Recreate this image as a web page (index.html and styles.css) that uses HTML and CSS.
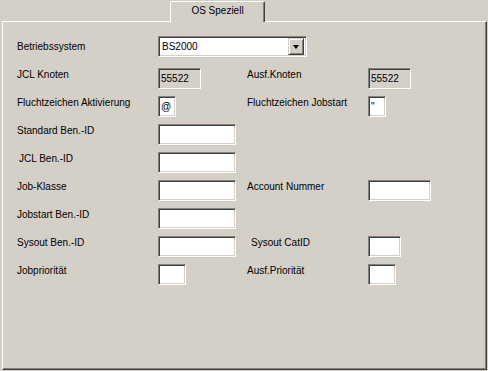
FILE: index.html
```html
<!DOCTYPE html>
<html lang="de">
<head>
    <meta charset="UTF-8">
    <title>OS Speziell</title>
    <link rel="stylesheet" href="styles.css">
</head>
<body>
    <div class="window">
        <div class="tabbar">
            <div class="tab">OS Speziell</div>
        </div>

        <div class="panel">
            <div class="combo-row">
                <label class="label">Betriebssystem</label>
                <div class="combo">
                    <span class="combo-text">BS2000</span>
                    <span class="combo-button"><span class="arrow"></span></span>
                </div>
            </div>

            <div class="form-grid">
                <label class="label">JCL Knoten</label>
                <div><input class="field field-ro w-node" value="55522" readonly></div>
                <label class="label">Ausf.Knoten</label>
                <div><input class="field field-ro w-node" value="55522" readonly></div>

                <label class="label">Fluchtzeichen Aktivierung</label>
                <div><input class="field w-char" value="@"></div>
                <label class="label">Fluchtzeichen Jobstart</label>
                <div><input class="field w-char" value="&quot;"></div>

                <label class="label">Standard Ben.-ID</label>
                <div><input class="field w-id"></div>
                <div></div>
                <div></div>

                <label class="label indent">JCL Ben.-ID</label>
                <div><input class="field w-id"></div>
                <div></div>
                <div></div>

                <label class="label">Job-Klasse</label>
                <div><input class="field w-id"></div>
                <label class="label">Account Nummer</label>
                <div><input class="field w-account"></div>

                <label class="label">Jobstart Ben.-ID</label>
                <div><input class="field w-id"></div>
                <div></div>
                <div></div>

                <label class="label">Sysout Ben.-ID</label>
                <div><input class="field w-id"></div>
                <label class="label indent-wide">Sysout CatID</label>
                <div><input class="field w-cat"></div>

                <label class="label">Jobpriorität</label>
                <div><input class="field w-prio"></div>
                <label class="label">Ausf.Priorität</label>
                <div><input class="field w-prio"></div>
            </div>
        </div>
    </div>
</body>
</html>
```

FILE: styles.css
```css
* {
    margin: 0;
    padding: 0;
    box-sizing: border-box;
}

body {
    background-color: #d4d0c8;
    font-family: "Liberation Sans", Arial, sans-serif;
    font-size: 10px;
    color: #000;
}

.window {
    width: 487px;
    padding: 1px 0 0 2px;
}

.tabbar {
    display: flex;
    height: 20px;
    padding-left: 168px;
}

.tab {
    width: 95px;
    height: 21px;
    padding-top: 3px;
    line-height: 12px;
    text-align: center;
    background-color: #d4d0c8;
    border-top: 1px solid #fff;
    border-left: 1px solid #fff;
    border-right: 1px solid #404040;
    border-radius: 2px 2px 0 0;
    box-shadow: inset -1px 0 #808080;
    position: relative;
    z-index: 1;
}

.panel {
    width: 485px;
    height: 349px;
    border-top: 1px solid #fff;
    border-left: 1px solid #fff;
    border-right: 1px solid #404040;
    border-bottom: 1px solid #404040;
    box-shadow: inset -1px -1px #808080;
    padding: 14px 0 0 14px;
}

.combo-row {
    display: flex;
    align-items: center;
    height: 21px;
    margin-bottom: 11px;
}

.combo-row .label {
    width: 141px;
    padding-top: 0;
}

.label {
    line-height: 12px;
    padding-top: 1px;
    white-space: nowrap;
}

.indent {
    padding-left: 2px;
}

.indent-wide {
    padding-left: 4px;
}

.combo {
    width: 149px;
    height: 21px;
    display: flex;
    align-items: center;
    justify-content: space-between;
    background-color: #fff;
    border: 1px solid;
    border-color: #808080 #fff #fff #808080;
    box-shadow: inset 1px 1px #404040, inset -1px -1px #d4d0c8;
    padding: 1px 2px 1px 3px;
}

.combo-text {
    line-height: 12px;
}

.combo-button {
    width: 16px;
    height: 17px;
    display: flex;
    justify-content: center;
    align-items: center;
    background-color: #d4d0c8;
    border: 1px solid;
    border-color: #d4d0c8 #404040 #404040 #d4d0c8;
    box-shadow: inset 1px 1px #fff, inset -1px -1px #808080;
}

.arrow {
    width: 0;
    height: 0;
    border-left: 3.5px solid transparent;
    border-right: 3.5px solid transparent;
    border-top: 4px solid #000;
}

.form-grid {
    display: grid;
    grid-template-columns: 141px 89px 121px auto;
    grid-auto-rows: 21px;
    row-gap: 7px;
}

.field {
    display: block;
    height: 21px;
    padding: 0 2px;
    font-family: inherit;
    font-size: 10px;
    color: #000;
    background-color: #fff;
    border: 1px solid;
    border-color: #808080 #fff #fff #808080;
    box-shadow: inset 1px 1px #404040, inset -1px -1px #d4d0c8;
    outline: none;
}

.field-ro {
    background-color: #d4d0c8;
}

.w-node {
    width: 43px;
}

.w-char {
    width: 18px;
}

.w-id {
    width: 78px;
}

.w-account {
    width: 63px;
}

.w-cat {
    width: 33px;
}

.w-prio {
    width: 28px;
}
```
